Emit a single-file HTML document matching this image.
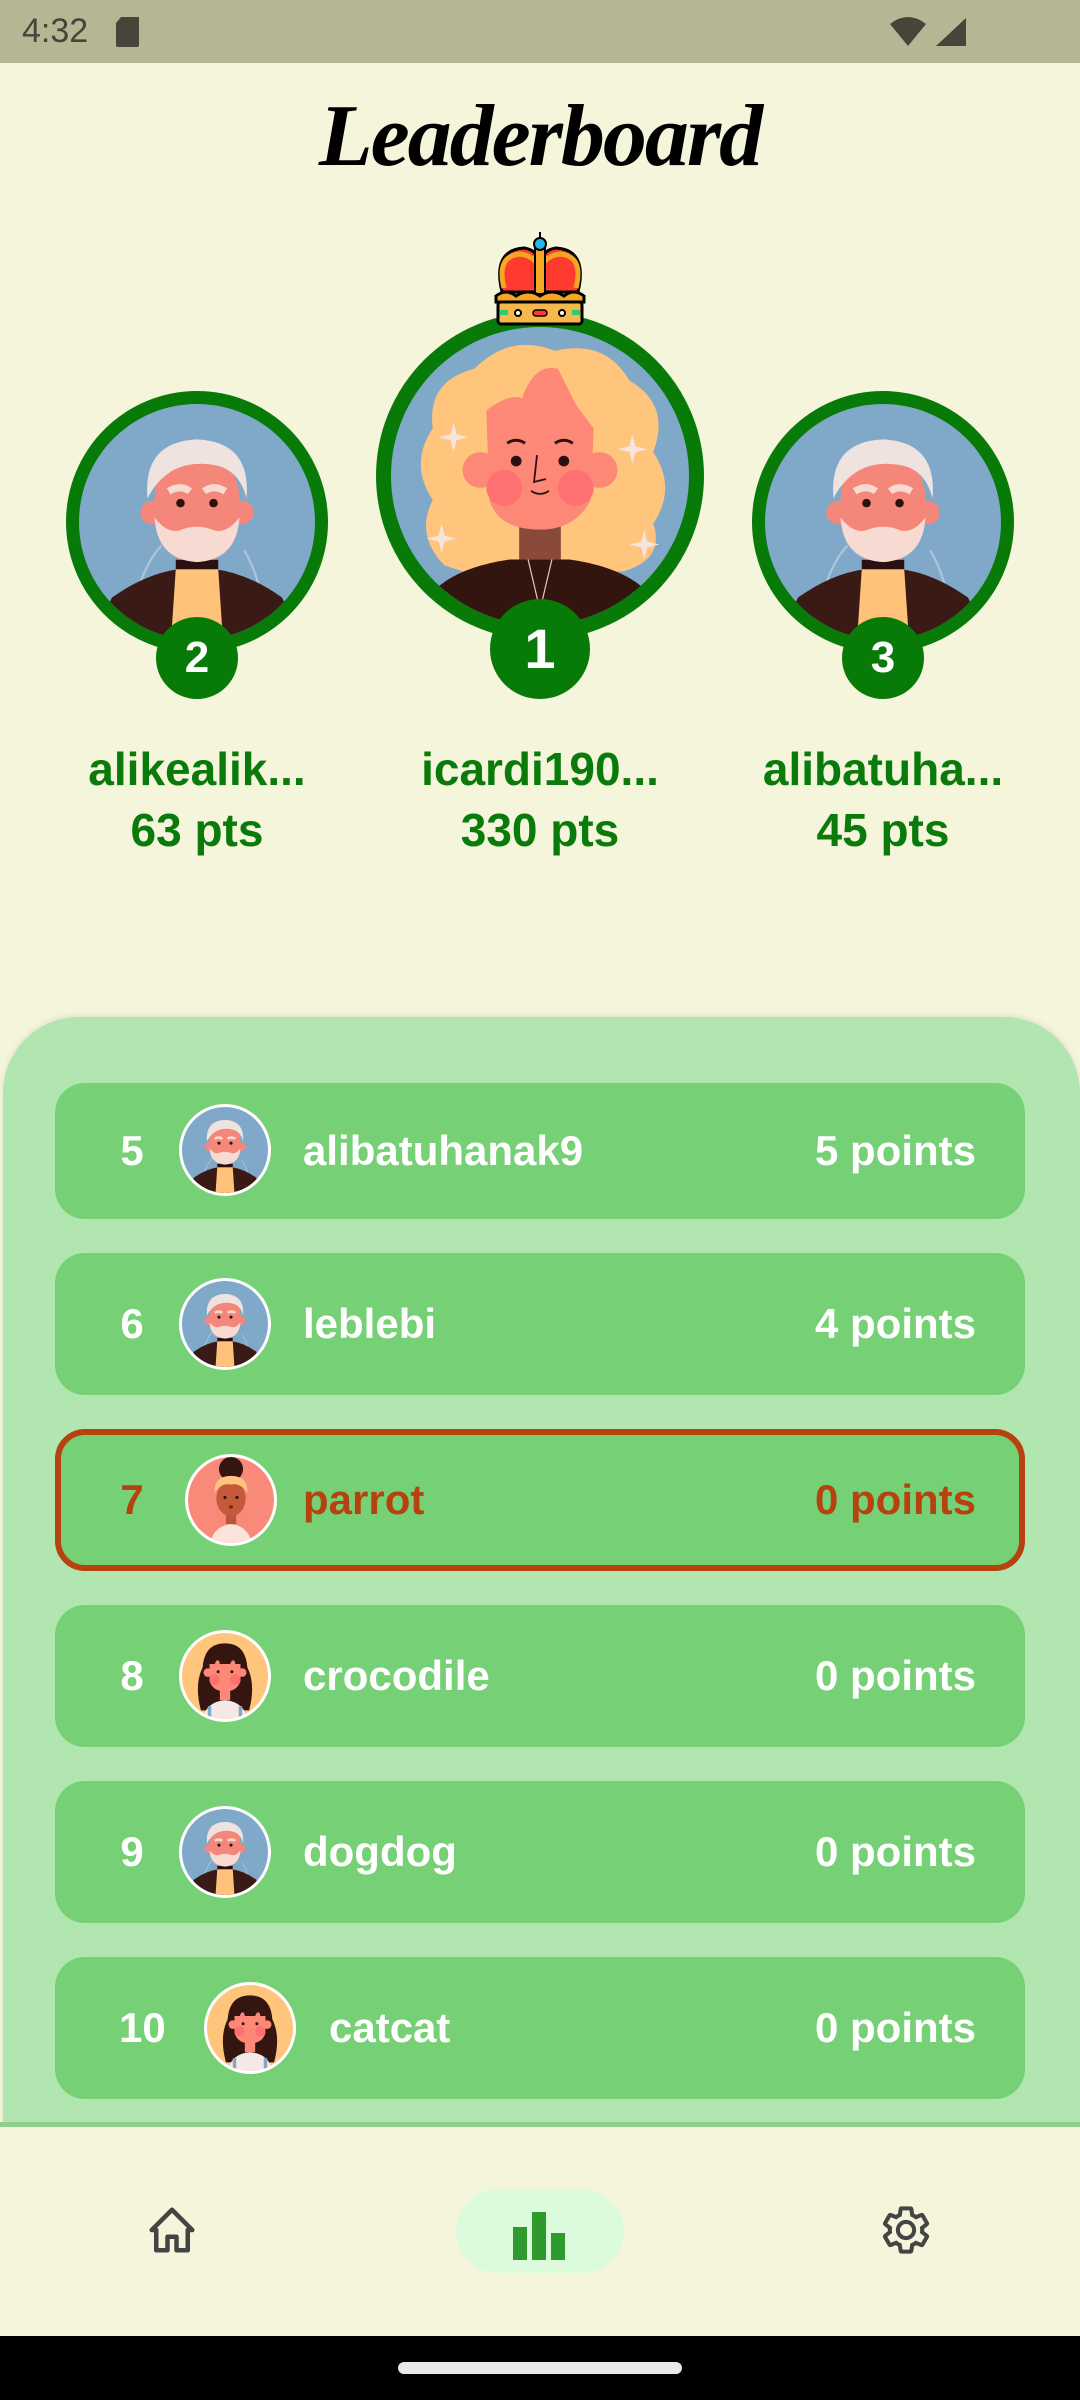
<!DOCTYPE html>
<html><head><meta charset="utf-8">
<style>
*{margin:0;padding:0;box-sizing:border-box}
body{width:1080px;height:2400px;background:#f5f5dc;position:relative;overflow:hidden;font-family:"Liberation Sans",sans-serif}
.abs{position:absolute}
.status{left:0;top:0;width:1080px;height:63px;background:#b5b794}
.time{left:22px;top:12px;font-size:34px;color:#45453a}
.title{left:0;width:1080px;top:86px;text-align:center;font-family:"Liberation Serif",serif;font-style:italic;font-weight:bold;font-size:88px;color:#000;letter-spacing:-2px}
.ring{border-radius:50%;background:#077a07;overflow:hidden}
.badge{border-radius:50%;background:#077a07;color:#fff;font-weight:bold;text-align:center}
.nm{text-align:center;color:#0a7a0a;font-weight:bold;font-size:46px;width:340px}
.panel{left:3px;top:1017px;width:1077px;height:1110px;background:#b1e6b0;border-radius:76px 76px 0 0;box-shadow:0 -2px 6px rgba(0,0,0,0.08)}
.row{position:absolute;left:55px;width:970px;height:142px;background:#76d076;border-radius:30px;color:#fff;font-weight:bold;font-size:42px}
.row .rk{position:absolute;left:62px;top:0;line-height:142px;width:30px;text-align:center}
.row .av{position:absolute;top:25px;width:92px;height:92px;border-radius:50%;border:3px solid #fff;overflow:hidden;background:#fff}
.row .n{position:absolute;left:248px;top:0;line-height:142px}
.row .p{position:absolute;right:49px;top:0;line-height:142px}
.me{border:6px solid #b5420f;color:#b5420f}
.me .rk{left:56px}.me .n{left:242px}.me .p{right:43px}
</style></head><body>
<svg width="0" height="0" style="position:absolute">
<defs>
<symbol id="man" viewBox="0 0 100 100">
<rect width="100" height="100" fill="#80a8c8"/>
<path d="M20 100 Q25 70 35 60 M80 100 Q78 75 70 62" stroke="#a9c4dc" fill="none" stroke-width="1"/>
<path d="M5 100 L14 82 Q28 72 42 70 L58 70 Q72 72 86 82 L95 100Z" fill="#3a1a14"/>
<path d="M41 70 L59 70 L61 100 L39 100Z" fill="#ffc27a"/>
<rect x="42" y="55" width="16" height="15" fill="#f5877a"/>
<rect x="41" y="66" width="18" height="4" fill="#2a1010"/>
<circle cx="31" cy="46" r="5" fill="#f5877a"/><circle cx="69" cy="46" r="5" fill="#f5877a"/>
<ellipse cx="50" cy="41" rx="18" ry="22" fill="#f5877a"/>
<path d="M29 40 Q27 16 50 15 Q73 16 71 40 Q68 28 58 26 Q48 24 40 28 Q33 32 29 40Z" fill="#eee3de"/>
<path d="M32 48 Q33 66 50 67 Q67 66 68 48 Q62 56 56 53 Q50 51 44 53 Q38 56 32 48Z" fill="#f7dad1"/>
<path d="M38 37 Q43 34 47 37 M53 37 Q57 34 62 37" stroke="#f7dad1" stroke-width="3" fill="none"/>
<circle cx="43" cy="42" r="1.8" fill="#2a1010"/><circle cx="57" cy="42" r="1.8" fill="#2a1010"/>
</symbol>
<symbol id="queen" viewBox="0 0 100 100">
<rect width="100" height="100" fill="#80a8c8"/>
<path d="M18 80 Q8 70 14 58 Q6 46 14 34 Q12 18 28 14 Q40 2 55 8 Q72 4 80 18 Q94 26 88 42 Q96 54 88 66 Q92 78 78 82 L24 82Z" fill="#ffc57c"/>
<path d="M8 100 Q12 82 40 78 L60 78 Q88 82 92 100Z" fill="#33150f"/>
<rect x="43" y="64" width="14" height="14" fill="#8a4a3a"/>
<path d="M46 78 L50 95 L54 78" stroke="#e8c8b8" stroke-width="0.4" fill="none"/>
<circle cx="30" cy="48" r="6" fill="#fd8878"/><circle cx="70" cy="48" r="6" fill="#fd8878"/>
<path d="M32 28 Q40 22 44 24 Q48 12 56 14 Q60 22 62 26 L68 34 L67 58 Q62 68 50 68 Q36 68 33 58Z" fill="#fd8878"/>
<circle cx="38" cy="54" r="6" fill="#ff7070"/><circle cx="62" cy="54" r="6" fill="#ff7070"/>
<circle cx="42" cy="45" r="1.8" fill="#2a1010"/><circle cx="58" cy="45" r="1.8" fill="#2a1010"/>
<path d="M39 39 Q42 37 45 39 M55 39 Q58 37 61 39" stroke="#2a1010" stroke-width="1" fill="none"/>
<path d="M49 43 L48 52 L52 51 M47 55 Q50 57 53 55" stroke="#2a1010" stroke-width="0.6" fill="none"/>
<path d="M20 36 l1 -4 l1 4 l4 1 l-4 1 l-1 4 l-1 -4 l-4 -1z M80 40 l1 -4 l1 4 l4 1 l-4 1 l-1 4 l-1 -4 l-4 -1z M16 70 l1 -4 l1 4 l4 1 l-4 1 l-1 4 l-1 -4 l-4 -1z M84 72 l1 -4 l1 4 l4 1 l-4 1 l-1 4 l-1 -4 l-4 -1z" fill="#f7e4dc"/>
</symbol>
<symbol id="girl" viewBox="0 0 100 100">
<rect width="100" height="100" fill="#ffc57c"/>
<path d="M22 90 Q14 60 24 40 Q26 12 50 12 Q74 12 76 40 Q86 60 78 90Z" fill="#35150f"/>
<path d="M24 100 Q28 80 50 78 Q72 80 76 100Z" fill="#f6e8e4"/>
<rect x="30" y="85" width="4" height="15" fill="#80a8c8"/><rect x="66" y="85" width="4" height="15" fill="#80a8c8"/>
<rect x="44" y="62" width="12" height="16" fill="#fd8878"/>
<circle cx="30" cy="46" r="5" fill="#fd8878"/><circle cx="70" cy="46" r="5" fill="#fd8878"/>
<path d="M32 32 L68 32 L68 56 Q64 68 50 68 Q36 68 32 56Z" fill="#fd8878"/>
<path d="M30 36 Q30 18 50 17 Q70 18 70 36 L62 36 L60 28 L56 36 L44 36 L42 28 L38 36Z" fill="#35150f"/>
<circle cx="38" cy="54" r="6" fill="#ff7070"/><circle cx="62" cy="54" r="6" fill="#ff7070"/>
<circle cx="42" cy="45" r="1.7" fill="#2a1010"/><circle cx="58" cy="45" r="1.7" fill="#2a1010"/>
</symbol>
<symbol id="parrot" viewBox="0 0 100 100">
<rect width="100" height="100" fill="#f98a7a"/>
<circle cx="50" cy="14" r="14" fill="#35150f"/>
<path d="M26 100 Q30 80 50 78 Q70 80 74 100Z" fill="#fbe4dc"/>
<rect x="44" y="62" width="12" height="16" fill="#b9553a"/>
<ellipse cx="50" cy="48" rx="17" ry="21" fill="#c45a3a"/>
<path d="M31 42 Q30 22 50 22 Q70 22 69 42 Q62 30 50 32 Q38 30 31 42Z" fill="#ffc57c"/>
<circle cx="43" cy="47" r="1.8" fill="#2a1010"/><circle cx="57" cy="47" r="1.8" fill="#2a1010"/>
<ellipse cx="50" cy="58" rx="2.5" ry="2" fill="#7a2a1a"/>
</symbol>
<clipPath id="cc"><circle cx="50" cy="50" r="50"/></clipPath>
</defs>
</svg>

<div class="abs status"></div>
<div class="abs time">4:32</div>
<svg class="abs" style="left:115px;top:17px" width="26" height="30" viewBox="0 0 26 30"><path d="M6 0 H24 V28 Q24 30 22 30 H3 Q1 30 1 28 V6Z" fill="#45453a"/></svg>
<svg class="abs" style="left:890px;top:16px" width="80" height="32" viewBox="0 0 80 32"><path d="M0 8 Q18 -6 36 8 L18 30Z" fill="#45453a"/><path d="M76 2 V30 H46Z" fill="#45453a"/></svg>

<div class="abs title">Leaderboard</div>

<div class="abs ring" style="left:66px;top:391px;width:262px;height:262px">
<svg style="position:absolute;left:13px;top:13px" width="236" height="236" viewBox="0 0 100 100"><g clip-path="url(#cc)"><use href="#man"/></g></svg></div>
<div class="abs ring" style="left:752px;top:391px;width:262px;height:262px">
<svg style="position:absolute;left:13px;top:13px" width="236" height="236" viewBox="0 0 100 100"><g clip-path="url(#cc)"><use href="#man"/></g></svg></div>
<div class="abs ring" style="left:376px;top:312px;width:328px;height:328px">
<svg style="position:absolute;left:15px;top:15px" width="298" height="298" viewBox="0 0 100 100"><g clip-path="url(#cc)"><use href="#queen"/></g></svg></div>

<svg class="abs" style="left:488px;top:230px" width="104" height="100" viewBox="0 0 104 100">
<line x1="52" y1="2" x2="52" y2="10" stroke="#000" stroke-width="2"/>
<path d="M14 62 Q4 20 36 18 Q50 20 52 34 Q54 20 68 18 Q100 20 90 62Z" fill="#ff3b2f" stroke="#000" stroke-width="3"/>
<path d="M16 58 Q8 26 32 24 Q48 26 52 40 M88 58 Q96 26 72 24 Q56 26 52 40" stroke="#f5a623" stroke-width="5" fill="none"/>
<rect x="47" y="18" width="10" height="46" fill="#f5a623" stroke="#000" stroke-width="2"/>
<circle cx="52" cy="14" r="6" fill="#29b6e8" stroke="#000" stroke-width="2"/>
<path d="M8 66 Q18 58 28 66 Q40 58 52 66 Q64 58 76 66 Q86 58 96 66 V72 H8Z" fill="#f5a623" stroke="#000" stroke-width="3"/>
<rect x="10" y="72" width="84" height="22" rx="3" fill="#f5b84a" stroke="#000" stroke-width="3"/>
<circle cx="30" cy="83" r="3" fill="#fff" stroke="#000" stroke-width="2"/><circle cx="74" cy="83" r="3" fill="#fff" stroke="#000" stroke-width="2"/>
<rect x="45" y="80" width="14" height="6" rx="3" fill="#ff3b2f" stroke="#000" stroke-width="1.5"/>
<rect x="12" y="80" width="8" height="5" fill="#2ecc71"/><rect x="84" y="80" width="8" height="5" fill="#2ecc71"/>
</svg>

<div class="abs badge" style="left:156px;top:617px;width:82px;height:82px;line-height:82px;font-size:44px">2</div>
<div class="abs badge" style="left:490px;top:599px;width:100px;height:100px;line-height:100px;font-size:56px">1</div>
<div class="abs badge" style="left:842px;top:617px;width:82px;height:82px;line-height:82px;font-size:44px">3</div>

<div class="abs nm" style="left:27px;top:742px">alikealik...</div>
<div class="abs nm" style="left:27px;top:803px">63 pts</div>
<div class="abs nm" style="left:370px;top:742px">icardi190...</div>
<div class="abs nm" style="left:370px;top:803px">330 pts</div>
<div class="abs nm" style="left:713px;top:742px">alibatuha...</div>
<div class="abs nm" style="left:713px;top:803px">45 pts</div>

<div class="abs panel"></div>

<div class="row" style="top:1083px;height:136px"><span class="rk" style="line-height:136px">5</span>
<svg class="av" style="left:124px;top:21px" viewBox="0 0 100 100"><use href="#man"/></svg>
<span class="n" style="line-height:136px">alibatuhanak9</span><span class="p" style="line-height:136px">5 points</span></div>

<div class="row" style="top:1253px"><span class="rk">6</span>
<svg class="av" style="left:124px" viewBox="0 0 100 100"><use href="#man"/></svg>
<span class="n">leblebi</span><span class="p">4 points</span></div>

<div class="row me" style="top:1429px"><span class="rk" style="line-height:130px">7</span>
<svg class="av" style="left:124px;top:19px" viewBox="0 0 100 100"><use href="#parrot"/></svg>
<span class="n" style="line-height:130px">parrot</span><span class="p" style="line-height:130px">0 points</span></div>

<div class="row" style="top:1605px"><span class="rk">8</span>
<svg class="av" style="left:124px" viewBox="0 0 100 100"><use href="#girl"/></svg>
<span class="n">crocodile</span><span class="p">0 points</span></div>

<div class="row" style="top:1781px"><span class="rk">9</span>
<svg class="av" style="left:124px" viewBox="0 0 100 100"><use href="#man"/></svg>
<span class="n">dogdog</span><span class="p">0 points</span></div>

<div class="row" style="top:1957px"><span class="rk" style="left:64px;width:40px">10</span>
<svg class="av" style="left:149px" viewBox="0 0 100 100"><use href="#girl"/></svg>
<span class="n" style="left:274px">catcat</span><span class="p">0 points</span></div>

<div class="abs" style="left:0;top:2122px;width:1080px;height:5px;background:#8ecf8c"></div>
<div class="abs" style="left:0;top:2127px;width:1080px;height:209px;background:#f5f5dc"></div>

<svg class="abs" style="left:145px;top:2203px" width="54" height="54" viewBox="0 0 24 24"><path d="M12 3 L3 12 H5 V21 H10 V15 H14 V21 H19 V12 H21Z" fill="none" stroke="#444" stroke-width="2" stroke-linejoin="round"/></svg>
<div class="abs" style="left:456px;top:2189px;width:168px;height:84px;border-radius:42px;background:#dcfadc"></div>
<svg class="abs" style="left:512px;top:2211px" width="56" height="50" viewBox="0 0 56 50"><rect x="1" y="16" width="14" height="33" fill="#2e9a2e"/><rect x="20" y="1" width="14" height="48" fill="#2e9a2e"/><rect x="39" y="22" width="14" height="27" fill="#2e9a2e"/></svg>
<svg class="abs" style="left:879px;top:2203px" width="54" height="54" viewBox="0 0 24 24"><path d="M19.14 12.94c.04-.3.06-.61.06-.94 0-.32-.02-.64-.07-.94l2.030-1.58a.49.49 0 0 0 .12-.61l-1.92-3.32a.488.488 0 0 0-.59-.22l-2.39.96c-.5-.38-1.03-.7-1.62-.94l-.36-2.54a.484.484 0 0 0-.48-.41h-3.84c-.24 0-.43.17-.47.41l-.36 2.54c-.59.24-1.13.57-1.620.94l-2.39-.96c-.22-.08-.47 0-.59.22L2.74 8.87c-.12.21-.08.47.12.61l2.03 1.58c-.05.3-.09.63-.09.94s.02.64.07.94l-2.03 1.58a.49.49 0 0 0-.12.61l1.92 3.32c.12.22.37.29.59.22l2.39-.96c.5.38 1.03.7 1.62.94l.36 2.54c.05.24.24.41.48.41h3.84c.24 0 .44-.17.47-.41l.36-2.54c.59-.24 1.13-.56 1.62-.94l2.39.96c.22.08.47 0 .59-.22l1.92-3.32c.12-.22.07-.47-.12-.61l-2.01-1.58zM12 15.6c-1.98 0-3.6-1.62-3.6-3.6s1.62-3.6 3.6-3.6 3.6 1.62 3.6 3.6-1.62 3.6-3.6 3.6z" fill="none" stroke="#444" stroke-width="1.8"/></svg>

<div class="abs" style="left:0;top:2336px;width:1080px;height:64px;background:#000"></div>
<div class="abs" style="left:398px;top:2362px;width:284px;height:12px;border-radius:6px;background:#e8e8e8"></div>
</body></html>
